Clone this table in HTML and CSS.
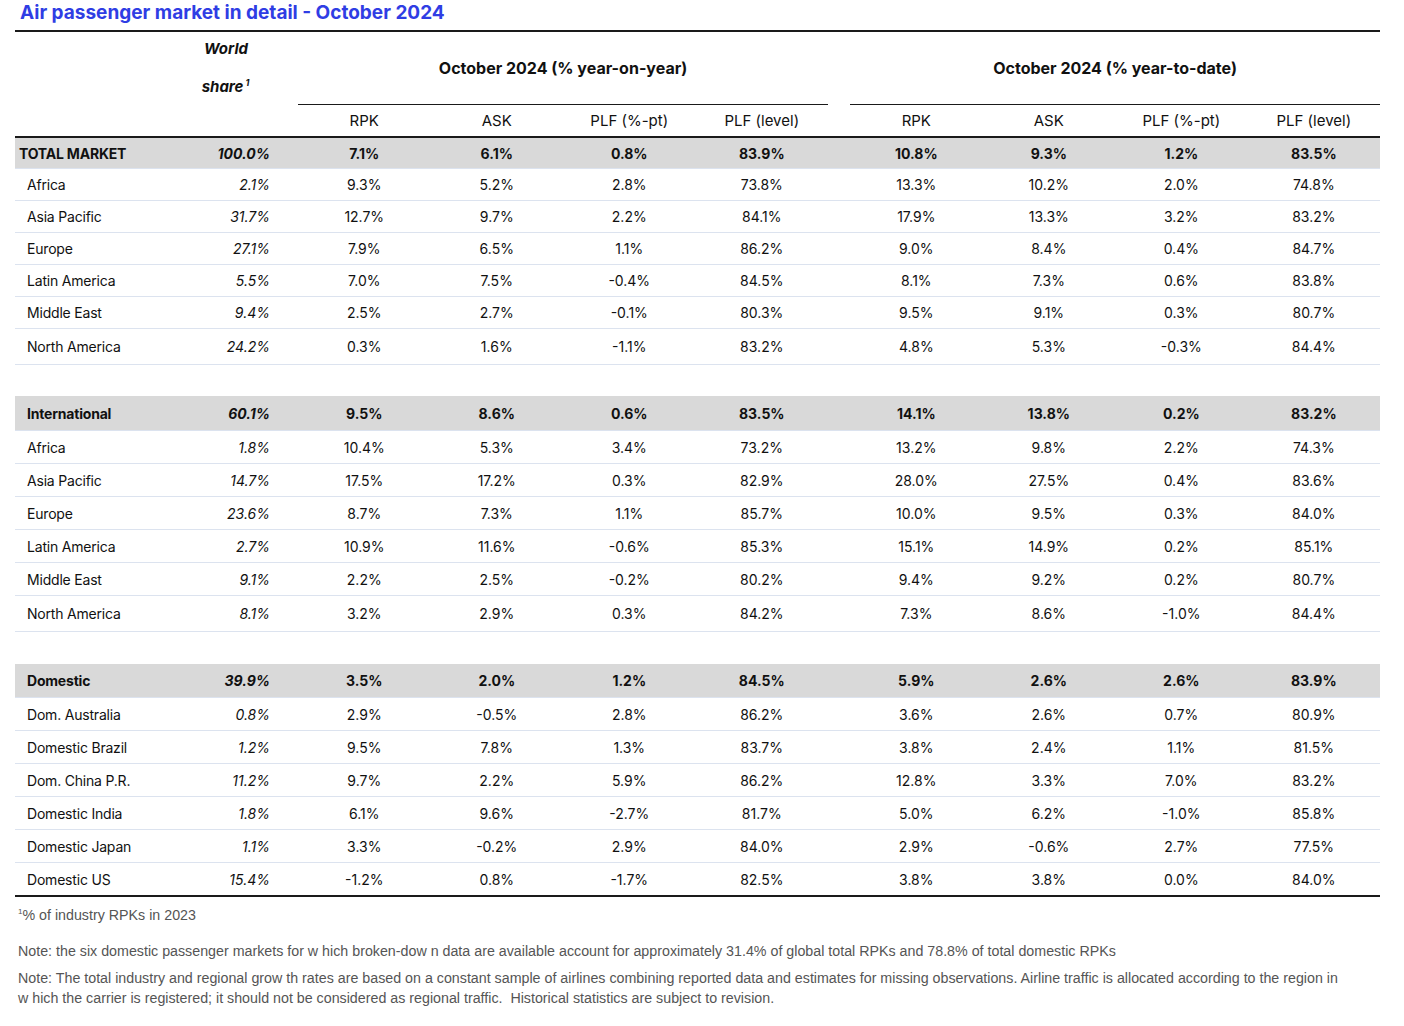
FILE: index.html
```html
<!DOCTYPE html>
<html lang="en">
<head>
<meta charset="utf-8">
<title>Air passenger market in detail - October 2024</title>
<link rel="stylesheet" href="styles.css">
</head>
<body>
<div class="page">
  <h1 class="title">Air passenger market in detail - October 2024</h1>
  <table class="market">
    <colgroup>
      <col class="c-label"><col class="c-share"><col class="c-gap1">
      <col class="c-num"><col class="c-num"><col class="c-num"><col class="c-num">
      <col class="c-gap2">
      <col class="c-num"><col class="c-num"><col class="c-num"><col class="c-num">
    </colgroup>
    <thead>
      <tr class="h1">
        <th></th>
        <th class="share-h"><span class="w">World</span><span class="s">share<sup>1</sup></span></th>
        <th></th>
        <th colspan="4" class="grp">October 2024 (% year-on-year)</th>
        <th></th>
        <th colspan="4" class="grp">October 2024 (% year-to-date)</th>
      </tr>
      <tr class="h2">
        <th></th><th></th><th></th>
        <th>RPK</th><th>ASK</th><th>PLF (%-pt)</th><th>PLF (level)</th>
        <th></th>
        <th>RPK</th><th>ASK</th><th>PLF (%-pt)</th><th>PLF (level)</th>
      </tr>
    </thead>
    <tbody>
      <tr class="group first"><td class="lbl top">TOTAL MARKET</td><td class="sh">100.0%</td><td></td><td>7.1%</td><td>6.1%</td><td>0.8%</td><td>83.9%</td><td></td><td>10.8%</td><td>9.3%</td><td>1.2%</td><td>83.5%</td></tr>
      <tr class="r1"><td class="lbl">Africa</td><td class="sh">2.1%</td><td></td><td>9.3%</td><td>5.2%</td><td>2.8%</td><td>73.8%</td><td></td><td>13.3%</td><td>10.2%</td><td>2.0%</td><td>74.8%</td></tr>
      <tr class="r1"><td class="lbl">Asia Pacific</td><td class="sh">31.7%</td><td></td><td>12.7%</td><td>9.7%</td><td>2.2%</td><td>84.1%</td><td></td><td>17.9%</td><td>13.3%</td><td>3.2%</td><td>83.2%</td></tr>
      <tr class="r1"><td class="lbl">Europe</td><td class="sh">27.1%</td><td></td><td>7.9%</td><td>6.5%</td><td>1.1%</td><td>86.2%</td><td></td><td>9.0%</td><td>8.4%</td><td>0.4%</td><td>84.7%</td></tr>
      <tr class="r1"><td class="lbl">Latin America</td><td class="sh">5.5%</td><td></td><td>7.0%</td><td>7.5%</td><td>-0.4%</td><td>84.5%</td><td></td><td>8.1%</td><td>7.3%</td><td>0.6%</td><td>83.8%</td></tr>
      <tr class="r1"><td class="lbl">Middle East</td><td class="sh">9.4%</td><td></td><td>2.5%</td><td>2.7%</td><td>-0.1%</td><td>80.3%</td><td></td><td>9.5%</td><td>9.1%</td><td>0.3%</td><td>80.7%</td></tr>
      <tr class="last"><td class="lbl">North America</td><td class="sh">24.2%</td><td></td><td>0.3%</td><td>1.6%</td><td>-1.1%</td><td>83.2%</td><td></td><td>4.8%</td><td>5.3%</td><td>-0.3%</td><td>84.4%</td></tr>
      <tr class="spacer s1"><td colspan="12"></td></tr>
      <tr class="group g2"><td class="lbl">International</td><td class="sh">60.1%</td><td></td><td>9.5%</td><td>8.6%</td><td>0.6%</td><td>83.5%</td><td></td><td>14.1%</td><td>13.8%</td><td>0.2%</td><td>83.2%</td></tr>
      <tr><td class="lbl">Africa</td><td class="sh">1.8%</td><td></td><td>10.4%</td><td>5.3%</td><td>3.4%</td><td>73.2%</td><td></td><td>13.2%</td><td>9.8%</td><td>2.2%</td><td>74.3%</td></tr>
      <tr><td class="lbl">Asia Pacific</td><td class="sh">14.7%</td><td></td><td>17.5%</td><td>17.2%</td><td>0.3%</td><td>82.9%</td><td></td><td>28.0%</td><td>27.5%</td><td>0.4%</td><td>83.6%</td></tr>
      <tr><td class="lbl">Europe</td><td class="sh">23.6%</td><td></td><td>8.7%</td><td>7.3%</td><td>1.1%</td><td>85.7%</td><td></td><td>10.0%</td><td>9.5%</td><td>0.3%</td><td>84.0%</td></tr>
      <tr><td class="lbl">Latin America</td><td class="sh">2.7%</td><td></td><td>10.9%</td><td>11.6%</td><td>-0.6%</td><td>85.3%</td><td></td><td>15.1%</td><td>14.9%</td><td>0.2%</td><td>85.1%</td></tr>
      <tr><td class="lbl">Middle East</td><td class="sh">9.1%</td><td></td><td>2.2%</td><td>2.5%</td><td>-0.2%</td><td>80.2%</td><td></td><td>9.4%</td><td>9.2%</td><td>0.2%</td><td>80.7%</td></tr>
      <tr class="last"><td class="lbl">North America</td><td class="sh">8.1%</td><td></td><td>3.2%</td><td>2.9%</td><td>0.3%</td><td>84.2%</td><td></td><td>7.3%</td><td>8.6%</td><td>-1.0%</td><td>84.4%</td></tr>
      <tr class="spacer s2"><td colspan="12"></td></tr>
      <tr class="group"><td class="lbl">Domestic</td><td class="sh">39.9%</td><td></td><td>3.5%</td><td>2.0%</td><td>1.2%</td><td>84.5%</td><td></td><td>5.9%</td><td>2.6%</td><td>2.6%</td><td>83.9%</td></tr>
      <tr><td class="lbl">Dom. Australia</td><td class="sh">0.8%</td><td></td><td>2.9%</td><td>-0.5%</td><td>2.8%</td><td>86.2%</td><td></td><td>3.6%</td><td>2.6%</td><td>0.7%</td><td>80.9%</td></tr>
      <tr><td class="lbl">Domestic Brazil</td><td class="sh">1.2%</td><td></td><td>9.5%</td><td>7.8%</td><td>1.3%</td><td>83.7%</td><td></td><td>3.8%</td><td>2.4%</td><td>1.1%</td><td>81.5%</td></tr>
      <tr><td class="lbl">Dom. China P.R.</td><td class="sh">11.2%</td><td></td><td>9.7%</td><td>2.2%</td><td>5.9%</td><td>86.2%</td><td></td><td>12.8%</td><td>3.3%</td><td>7.0%</td><td>83.2%</td></tr>
      <tr><td class="lbl">Domestic India</td><td class="sh">1.8%</td><td></td><td>6.1%</td><td>9.6%</td><td>-2.7%</td><td>81.7%</td><td></td><td>5.0%</td><td>6.2%</td><td>-1.0%</td><td>85.8%</td></tr>
      <tr><td class="lbl">Domestic Japan</td><td class="sh">1.1%</td><td></td><td>3.3%</td><td>-0.2%</td><td>2.9%</td><td>84.0%</td><td></td><td>2.9%</td><td>-0.6%</td><td>2.7%</td><td>77.5%</td></tr>
      <tr class="final"><td class="lbl">Domestic US</td><td class="sh">15.4%</td><td></td><td>-1.2%</td><td>0.8%</td><td>-1.7%</td><td>82.5%</td><td></td><td>3.8%</td><td>3.8%</td><td>0.0%</td><td>84.0%</td></tr>
    </tbody>
  </table>
  <div class="notes">
    <p class="fn"><sup>1</sup>% of industry RPKs in 2023</p>
    <p class="n1">Note: the six domestic passenger markets for w hich broken-dow n data are available account for approximately 31.4% of global total RPKs and 78.8% of total domestic RPKs</p>
    <p class="n2">Note: The total industry and regional grow th rates are based on a constant sample of airlines combining reported data and estimates for missing observations. Airline traffic is allocated according to the region in<br>w hich the carrier is registered; it should not be considered as regional traffic.&nbsp; Historical statistics are subject to revision.</p>
  </div>
</div>
</body>
</html>
```
FILE: styles.css
```css
html, body {
  margin: 0;
  padding: 0;
  background: #ffffff;
}
body {
  font-family: Inter, "Noto Sans", "Liberation Sans", sans-serif;
  color: #111111;
}
.page {
  padding: 0 24px 0 15px;
  width: 1365px;
}
.title {
  margin: 0 0 0 5px;
  padding-top: 1px;
  height: 29px;
  font-size: 19px;
  line-height: 24px;
  font-weight: 700;
  color: #2f3de4;
}
.market {
  width: 1365px;
  border-collapse: collapse;
  table-layout: fixed;
  border-top: 2px solid #1a1a1a;
  font-size: 14px;
}
.c-label { width: 175px; }
.c-share { width: 93px; }
.c-gap1 { width: 15px; }
.c-num { width: 132.5px; }
.c-gap2 { width: 22px; }

.market th, .market td {
  padding: 0;
  text-align: center;
  white-space: nowrap;
}
.h1 th { height: 72px; vertical-align: middle; }
.h1 .grp {
  font-size: 16px;
  font-weight: 700;
  border-bottom: 1.5px solid #1a1a1a;
}
.share-h {
  font-size: 15px;
  font-weight: 700;
  font-style: italic;
  vertical-align: top !important;
  text-align: right;
  padding-right: 19px !important;
}
.share-h span { display: block; }
.share-h .w { margin-top: 7px; height: 38px; line-height: 20px; padding-right: 2px; }
.share-h .s { line-height: 20px; padding-right: 5px; }
.share-h sup { font-size: 9px; vertical-align: 6px; position: relative; left: 2px; line-height: 0; }

.h2 th {
  height: 31px;
  font-weight: 400;
  font-size: 15px;
  border-bottom: 2px solid #1a1a1a;
}

.market tbody td {
  height: 32px;
  border-bottom: 1px solid #dce3ef;
  font-size: 14px;
}
.market td.lbl { letter-spacing: -0.2px; }
.market tbody tr.r1 td { height: 31px; }
.market tbody tr.last td { height: 35px; }
.market tbody tr.group td {
  background: #d9d9d9;
  font-weight: 700;
  height: 33px;
}
.market tbody tr.group.first td { height: 30px; }
.market tbody tr.group.g2 td { height: 34px; }
.market tbody tr.final td {
  border-bottom: 2px solid #1a1a1a;
}
.market tbody tr.spacer td {
  border-bottom: none;
  background: transparent;
}
.market tbody tr.s1 td { height: 31px; }
.market tbody tr.s2 td { height: 32px; }

.market td.lbl {
  text-align: left;
  padding-left: 12px;
}
.market td.lbl.top { padding-left: 4px; }
.market td.sh {
  text-align: right;
  padding-right: 13px;
  font-style: italic;
  letter-spacing: 0;
}

.notes {
  color: #555555;
  font-family: "Liberation Sans Narrow", "Liberation Sans", Arial, sans-serif;
  font-size: 14.25px;
  padding-left: 3px;
}
.notes p { margin: 0; }
.fn { margin-top: 8px !important; line-height: 20px; }
.fn sup { font-size: 8px; vertical-align: 6px; line-height: 0; }
.n1 { margin-top: 16px !important; line-height: 20px; }
.n2 { margin-top: 7px !important; line-height: 20px; }
```
